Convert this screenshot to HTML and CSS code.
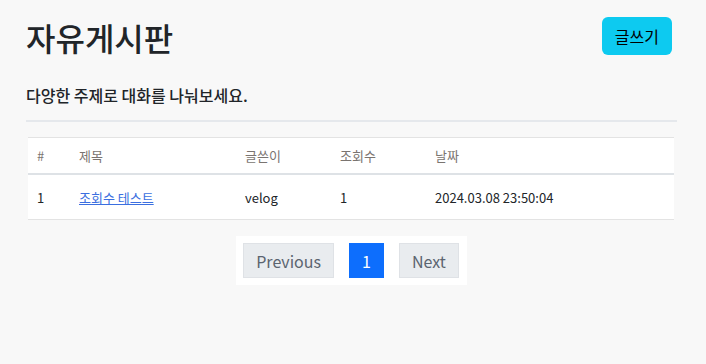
FILE: index.html
```html
<!DOCTYPE html>
<html>

<head>
    <title>자유게시판</title>
    <link rel="stylesheet" href="styles.css">
</head>

<body>
    <div class="board">
        <div class="board-header">
            <h1>자유게시판</h1>
            <button class="write-btn">글쓰기</button>
        </div>

        <p class="board-desc">다양한 주제로 대화를 나눠보세요.</p>
        <div class="line"></div>

        <table class="post-table">
            <thead>
                <tr>
                    <th class="col-no">#</th>
                    <th class="col-title">제목</th>
                    <th class="col-writer">글쓴이</th>
                    <th class="col-views">조회수</th>
                    <th>날짜</th>
                </tr>
            </thead>
            <tbody>
                <tr>
                    <td>1</td>
                    <td><a href="#">조회수 테스트</a></td>
                    <td>velog</td>
                    <td>1</td>
                    <td>2024.03.08 23:50:04</td>
                </tr>
            </tbody>
        </table>

        <div class="pagination-wrap">
            <div class="pagination">
                <button class="page-btn">Previous</button>
                <button class="page-btn active">1</button>
                <button class="page-btn">Next</button>
            </div>
        </div>
    </div>
</body>

</html>
```

FILE: styles.css
```css
body {
    margin: 0;
    padding: 0;
    background-color: #f8f8f8;
    font-family: "Noto Sans CJK KR", "Noto Sans", sans-serif;
    color: #212529;
}

.board {
    padding: 17px 34px 0 26px;
}

.board-header {
    display: flex;
    justify-content: space-between;
    align-items: flex-start;
}

.board-header h1 {
    margin: 0;
    font-size: 32px;
    font-weight: 500;
    line-height: 40px;
}

.write-btn {
    height: 38px;
    padding: 0 13px;
    background-color: #0dcaf0;
    color: #000000;
    border: none;
    border-radius: 6px;
    font-family: inherit;
    font-size: 16px;
}

.board-desc {
    margin: 26px 0 0 0;
    font-size: 16px;
    font-weight: 500;
    line-height: 24px;
}

.line {
    margin: 13px -5px 0 0;
    height: 2px;
    background-color: #e5e8ec;
}

.post-table {
    width: 646px;
    margin: 15px 0 0 2px;
    border-collapse: collapse;
    background-color: #ffffff;
    font-size: 13px;
}

.post-table th {
    text-align: left;
    font-weight: 400;
    color: #7a7470;
    height: 35px;
    border-top: 1px solid #e3e3e3;
    border-bottom: 2px solid #dee2e6;
    padding: 0 9px;
}

.post-table td {
    height: 44px;
    padding: 0 9px;
    border-bottom: 1px solid #e3e3e3;
}

.post-table a {
    color: #3b6fe0;
}

.col-no {
    width: 24px;
}

.col-title {
    width: 148px;
}

.col-writer {
    width: 77px;
}

.col-views {
    width: 77px;
}

.pagination-wrap {
    display: flex;
    justify-content: center;
    margin-top: 16px;
    padding-left: 5px;
}

.pagination {
    display: flex;
    gap: 15px;
    padding: 7px 8px 7px 7px;
    background-color: #ffffff;
}

.page-btn {
    height: 35px;
    padding: 0 12px;
    background-color: #e9ecef;
    color: #5b6470;
    border: 1px solid #dfe2e6;
    font-family: inherit;
    font-size: 16px;
}

.page-btn.active {
    background-color: #0d6efd;
    border-color: #0d6efd;
    color: #ffffff;
}
```
